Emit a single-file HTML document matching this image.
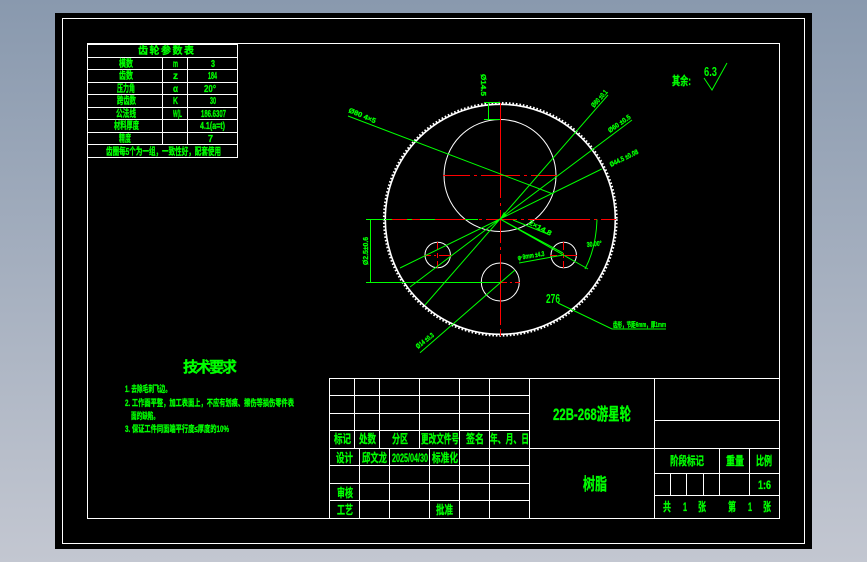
<!DOCTYPE html>
<html><head><meta charset="utf-8">
<style>
html,body{margin:0;padding:0;width:867px;height:562px;overflow:hidden;background:linear-gradient(180deg,#8999ae 0%,#c3c7d1 100%)}
svg{position:absolute;left:0;top:0}
text{font-family:"Liberation Sans","Noto Sans CJK SC",sans-serif;font-weight:700;fill:#00ff00;stroke:#00ff00;stroke-width:.3}
.w line,.w rect{stroke:#fff;stroke-width:1;fill:none}
.g{stroke:#00ff00;stroke-width:1;fill:none}
.r{stroke:#ff0000;stroke-width:1;fill:none}
</style></head><body>
<svg width="867" height="562" viewBox="0 0 867 562" xmlns="http://www.w3.org/2000/svg">
<rect x="55" y="13" width="757" height="536" fill="#000"/>
<g class="w" shape-rendering="crispEdges">
<rect x="62.5" y="18.5" width="742" height="525"/>
<rect x="87.5" y="43.5" width="692" height="475"/>
<!-- param table -->
<rect x="87.5" y="44.5" width="150" height="113"/>
<line x1="87" y1="57.5" x2="238" y2="57.5"/><line x1="87" y1="69.5" x2="238" y2="69.5"/>
<line x1="87" y1="82.5" x2="238" y2="82.5"/><line x1="87" y1="94.5" x2="238" y2="94.5"/>
<line x1="87" y1="107.5" x2="238" y2="107.5"/><line x1="87" y1="119.5" x2="238" y2="119.5"/>
<line x1="87" y1="132.5" x2="238" y2="132.5"/><line x1="87" y1="144.5" x2="238" y2="144.5"/>
<line x1="162.5" y1="57" x2="162.5" y2="144"/><line x1="187.5" y1="57" x2="187.5" y2="144"/>
<!-- title block -->
<line x1="329.5" y1="378" x2="329.5" y2="518"/>
<line x1="329" y1="378.5" x2="779" y2="378.5"/>
<line x1="329" y1="395.5" x2="529" y2="395.5"/><line x1="329" y1="413.5" x2="529" y2="413.5"/>
<line x1="329" y1="430.5" x2="529" y2="430.5"/><line x1="329" y1="448.5" x2="779" y2="448.5"/>
<line x1="329" y1="465.5" x2="529" y2="465.5"/><line x1="329" y1="483.5" x2="529" y2="483.5"/>
<line x1="329" y1="500.5" x2="529" y2="500.5"/>
<line x1="354.5" y1="378" x2="354.5" y2="448"/><line x1="379.5" y1="378" x2="379.5" y2="448"/>
<line x1="419.5" y1="378" x2="419.5" y2="448"/><line x1="459.5" y1="378" x2="459.5" y2="518"/>
<line x1="489.5" y1="378" x2="489.5" y2="518"/><line x1="529.5" y1="378" x2="529.5" y2="518"/>
<line x1="359.5" y1="448" x2="359.5" y2="518"/><line x1="389.5" y1="448" x2="389.5" y2="518"/>
<line x1="429.5" y1="448" x2="429.5" y2="518"/>
<line x1="654.5" y1="378" x2="654.5" y2="518"/>
<line x1="654" y1="420.5" x2="779" y2="420.5"/><line x1="654" y1="473.5" x2="779" y2="473.5"/>
<line x1="654" y1="495.5" x2="779" y2="495.5"/>
<line x1="719.5" y1="448" x2="719.5" y2="495"/><line x1="749.5" y1="448" x2="749.5" y2="495"/>
<line x1="670.5" y1="473" x2="670.5" y2="495"/><line x1="686.5" y1="473" x2="686.5" y2="495"/>
<line x1="703.5" y1="473" x2="703.5" y2="495"/>
</g>
<!-- gear -->
<g fill="none" stroke="#fff">
<circle cx="500.3" cy="219.3" r="115" stroke-width="1.6"/>
<circle cx="500.3" cy="219.3" r="116.3" stroke-width="2.2" stroke-dasharray="1.6 1.9"/>
<circle cx="500" cy="175.5" r="56" stroke-width="1"/>
<circle cx="437.7" cy="255" r="12.7" stroke-width="1"/>
<circle cx="563.7" cy="255" r="12.7" stroke-width="1"/>
<circle cx="500.3" cy="282" r="19" stroke-width="1"/>
</g>
<g class="r" shape-rendering="crispEdges">
<path d="M500.5 103V198M500.5 203V206M500.5 210V243M500.5 247V250M500.5 254V325M500.5 329V336"/>
<path d="M385 219.5H475M479 219.5H482M486 219.5H517M521 219.5H524M528 219.5H590M594 219.5H597M601 219.5H616"/>
<path d="M443 175.5H470M474 175.5H477M481 175.5H520M524 175.5H527M531 175.5H557"/>
<path d="M424 255.5H431M434 255.5H436M439 255.5H451M437.5 242V250M437.5 253V258M437.5 261V268"/>
<path d="M550 255.5H557M560 255.5H562M565 255.5H577M563.5 242V250M563.5 253V258M563.5 261V268"/>
<path d="M500 282.5H507M510 282.5H512M515 282.5H520"/>
</g>
<g class="g">
<path d="M366 219.5H384M366 282.5H500M370.5 219V282" shape-rendering="crispEdges"/>
<path d="M385 219.5H392M407 219.5H412M420 219.5H435M465 219.5H478" shape-rendering="crispEdges"/>
<path d="M484 102.5H500M484 119.5H500M488.5 103V119" shape-rendering="crispEdges"/>
<path d="M348 116L553 194"/>
<path d="M500 219L608 95M500 219L632 120M500 219L601.7 169"/>
<path d="M500 219L400 268M500 219L410 287M500 219L425 305"/>
<path d="M420 352.7L515 270"/>
<path d="M500 219L588 269M500 219L563 253M513 220L550 235"/>
<path d="M597 219.5C596.5 235 594 252 585 269"/>
<path d="M519 263L563 255"/>
<path d="M558 303L612 329H666"/>
<path d="M704 78L712 90L727 63"/>
</g>
<path d="M500 219L504 212L507 216Z" fill="#00ff00"/>
<!-- param text -->
<g font-size="10">
<text x="138" y="54" textLength="56" lengthAdjust="spacing">齿轮参数表</text>
<text x="119" y="67" textLength="14" lengthAdjust="spacingAndGlyphs">模数</text>
<text x="119" y="79" textLength="14" lengthAdjust="spacingAndGlyphs">齿数</text>
<text x="117" y="92" textLength="18" lengthAdjust="spacingAndGlyphs">压力角</text>
<text x="117" y="104" textLength="19" lengthAdjust="spacingAndGlyphs">跨齿数</text>
<text x="116" y="117" textLength="20" lengthAdjust="spacingAndGlyphs">公法线</text>
<text x="114" y="129" textLength="25" lengthAdjust="spacingAndGlyphs">材料厚度</text>
<text x="119" y="142" textLength="12" lengthAdjust="spacingAndGlyphs">精度</text>
<text x="173" y="67" textLength="5" lengthAdjust="spacingAndGlyphs">m</text>
<text x="173" y="79" textLength="5" lengthAdjust="spacingAndGlyphs">z</text>
<text x="173" y="92" textLength="5" lengthAdjust="spacingAndGlyphs">α</text>
<text x="173" y="104" textLength="5" lengthAdjust="spacingAndGlyphs">K</text>
<text x="173" y="117" textLength="9" lengthAdjust="spacingAndGlyphs">W(L</text>
<text x="211" y="67" textLength="4" lengthAdjust="spacingAndGlyphs">3</text>
<text x="208" y="79" textLength="9" lengthAdjust="spacingAndGlyphs">184</text>
<text x="204" y="92" textLength="12" lengthAdjust="spacingAndGlyphs">20°</text>
<text x="210" y="104" textLength="6" lengthAdjust="spacingAndGlyphs">30</text>
<text x="201" y="117" textLength="25" lengthAdjust="spacingAndGlyphs">186.6307</text>
<text x="200" y="129" textLength="25" lengthAdjust="spacingAndGlyphs">4.1(a=t)</text>
<text x="208" y="142" textLength="5" lengthAdjust="spacingAndGlyphs">7</text>
<text x="106" y="155" textLength="115" lengthAdjust="spacingAndGlyphs">齿圈每5个为一组，一致性好，配套使用</text>
</g>
<!-- title block text -->
<g font-size="12">
<text x="334" y="443" textLength="17" lengthAdjust="spacingAndGlyphs">标记</text>
<text x="359" y="443" textLength="17" lengthAdjust="spacingAndGlyphs">处数</text>
<text x="392" y="443" textLength="16" lengthAdjust="spacingAndGlyphs">分区</text>
<text x="421" y="443" textLength="38" lengthAdjust="spacingAndGlyphs">更改文件号</text>
<text x="466" y="443" textLength="18" lengthAdjust="spacingAndGlyphs">签名</text>
<text x="490" y="443" textLength="39" lengthAdjust="spacingAndGlyphs">年、月、日</text>
<text x="336" y="462" textLength="17" lengthAdjust="spacingAndGlyphs">设计</text>
<text x="362" y="462" textLength="25" lengthAdjust="spacingAndGlyphs">邱文龙</text>
<text x="392" y="462" textLength="36" lengthAdjust="spacingAndGlyphs">2025/04/30</text>
<text x="432" y="462" textLength="26" lengthAdjust="spacingAndGlyphs">标准化</text>
<text x="337" y="497" textLength="16" lengthAdjust="spacingAndGlyphs">审核</text>
<text x="337" y="514" textLength="16" lengthAdjust="spacingAndGlyphs">工艺</text>
<text x="436" y="514" textLength="17" lengthAdjust="spacingAndGlyphs">批准</text>
<text x="670" y="465" textLength="34" lengthAdjust="spacingAndGlyphs">阶段标记</text>
<text x="726" y="465" textLength="18" lengthAdjust="spacingAndGlyphs">重量</text>
<text x="756" y="465" textLength="16" lengthAdjust="spacingAndGlyphs">比例</text>
<text x="758" y="489" textLength="13" lengthAdjust="spacingAndGlyphs">1:6</text>
<text x="663" y="511" textLength="8" lengthAdjust="spacingAndGlyphs">共</text>
<text x="683" y="511" textLength="4" lengthAdjust="spacingAndGlyphs">1</text>
<text x="698" y="511" textLength="8" lengthAdjust="spacingAndGlyphs">张</text>
<text x="728" y="511" textLength="8" lengthAdjust="spacingAndGlyphs">第</text>
<text x="748" y="511" textLength="4" lengthAdjust="spacingAndGlyphs">1</text>
<text x="763" y="511" textLength="8" lengthAdjust="spacingAndGlyphs">张</text>
<text x="672" y="85" textLength="19" lengthAdjust="spacingAndGlyphs">其余:</text>
<text x="704" y="76" font-size="13" textLength="13" lengthAdjust="spacingAndGlyphs" font-weight="400" style="stroke-width:0">6.3</text>
<text x="546" y="303" font-size="13" textLength="14" lengthAdjust="spacingAndGlyphs" font-weight="400" style="stroke-width:0">276</text>
</g>
<text x="553" y="420" font-size="17" textLength="78" lengthAdjust="spacingAndGlyphs">22B-268游星轮</text>
<text x="583" y="490" font-size="17" textLength="24" lengthAdjust="spacingAndGlyphs">树脂</text>
<text x="183" y="372" font-size="15" textLength="54" lengthAdjust="spacing">技术要求</text>
<g font-size="9">
<text x="125" y="392" textLength="46" lengthAdjust="spacingAndGlyphs">1. 去除毛刺飞边。</text>
<text x="125" y="406" textLength="169" lengthAdjust="spacingAndGlyphs">2. 工作面平整，加工表面上，不应有划痕、擦伤等损伤零件表</text>
<text x="131" y="419" textLength="28" lengthAdjust="spacingAndGlyphs">面的缺陷。</text>
<text x="125" y="432" textLength="104" lengthAdjust="spacingAndGlyphs">3. 保证工件同面端平行度≤厚度的10%</text>
</g>
<!-- dimension text -->
<g font-size="7">
<text transform="translate(348 112) rotate(23)" textLength="29" lengthAdjust="spacingAndGlyphs">Ø80 4×5</text>
<text transform="translate(594 108) rotate(-48)" textLength="21" lengthAdjust="spacingAndGlyphs">Ø80 ±0.1</text>
<text transform="translate(610 133) rotate(-35)" textLength="26" lengthAdjust="spacingAndGlyphs">Ø60 ±0.5</text>
<text transform="translate(611 167) rotate(-26)" textLength="31" lengthAdjust="spacingAndGlyphs">Ø44.5 ±0.08</text>
<text transform="translate(418 349) rotate(-38)" textLength="21" lengthAdjust="spacingAndGlyphs">Ø14 ±0.3</text>
<text transform="translate(528 224) rotate(28)" textLength="25" lengthAdjust="spacingAndGlyphs">2×14.8</text>
<text transform="translate(518 260) rotate(-9)" textLength="27" lengthAdjust="spacingAndGlyphs">φ·9mm ±4.3</text>
<text transform="translate(587 247) rotate(-6)" textLength="15" lengthAdjust="spacingAndGlyphs">30.00°</text>
<text x="613" y="327" textLength="53" lengthAdjust="spacingAndGlyphs">齿形，节距6mm，厚1mm</text>
<text transform="translate(368 265) rotate(-90)" textLength="28" lengthAdjust="spacingAndGlyphs">Ø2.5±0.6</text>
<text transform="translate(481 74) rotate(90)" textLength="22" lengthAdjust="spacingAndGlyphs">Ø14.5</text>
</g>
</svg>
</body></html>
